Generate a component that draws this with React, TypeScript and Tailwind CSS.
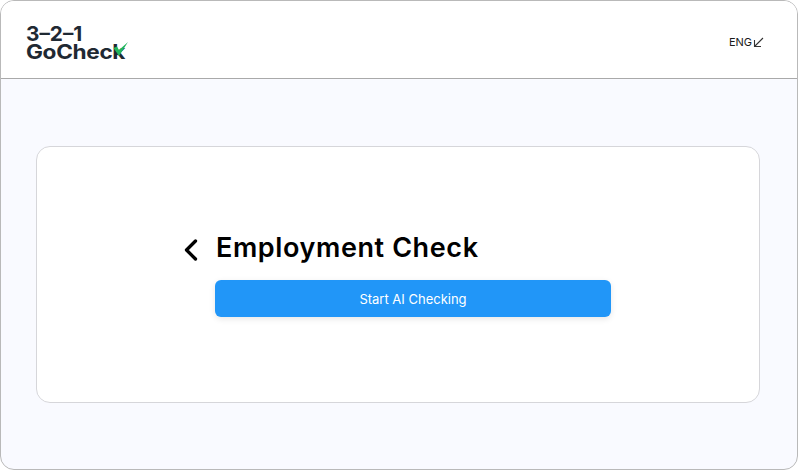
import React from "react";
import { ChevronLeft } from "lucide-react";

function Logo() {
  return (
    <div className="relative flex flex-col text-[#1f2933] font-['Inter',sans-serif] font-bold mt-[7px]">
      <span className="text-[20px] leading-[18px] origin-left scale-x-[1.04]">3–2–1</span>
      <span className="text-[20px] leading-[18px] tracking-[-0.3px] origin-left scale-x-[1.13]">GoCheck</span>
      <svg className="absolute left-[87px] top-[17px]" width="15" height="15" viewBox="0 0 15 15">
        <path d="M0.500 6 L4 4.500 L6 8 L15 0 L6 14 Z" fill="#22b65c" />
      </svg>
    </div>
  );
}

export default function App() {
  return (
    <div className="w-[798px] h-[470px] flex flex-col overflow-hidden rounded-[14px] border border-[#b9b9b9] bg-[#f9faff]">
      {/* Header */}
      <header className="h-[78px] shrink-0 flex items-center justify-between pl-[25px] pr-[33px] bg-white border-b border-[#a9a9a9]">
        <Logo />
        <div className="flex items-center gap-[1px] mt-[6px] text-[#1a1a1a] font-['Inter',sans-serif] text-[11px]">
          <span>ENG</span>
          <svg width="11" height="11" viewBox="0 0 11 11" fill="none" stroke="#333333" strokeWidth="1.1">
            <path d="M10 1 L1.500 9.500 M1.500 3 V9.500 H8" />
          </svg>
        </div>
      </header>

      {/* Card */}
      <main className="flex-1 pt-[67px] pl-[35px] pr-[37px]">
        <div className="h-[257px] rounded-[14px] border border-[#d6d6da] bg-white pt-[83px] pl-[142px]">
          <div className="flex items-center gap-[7px] h-[36px] -ml-[1px]">
            <ChevronLeft className="w-[36px] h-[36px] text-black mt-[3px] -ml-[5px]" strokeWidth={2.2} />
            <h1 className="font-['Inter',sans-serif] text-[27px] leading-[36px] font-semibold tracking-[0.6px] text-black">
              Employment Check
            </h1>
          </div>
          <button className="mt-[14px] ml-[36px] w-[396px] h-[37px] rounded-[6px] bg-[#2196f8] text-white font-['Inter',sans-serif] text-[13px] font-normal pt-[2px] shadow-[0_2px_6px_rgba(0,0,0,0.10)]">
            Start AI Checking
          </button>
        </div>
      </main>
    </div>
  );
}
